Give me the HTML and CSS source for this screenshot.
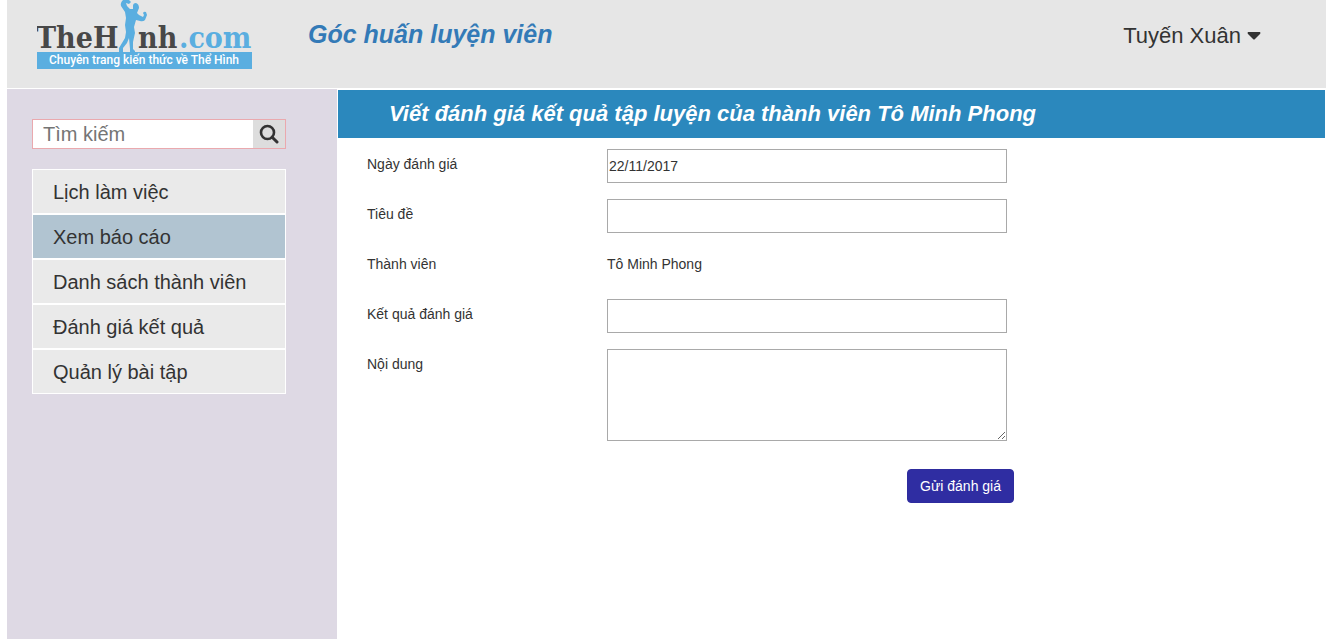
FILE: index.html
```html
<!DOCTYPE html>
<html lang="vi">
<head>
<meta charset="utf-8">
<title>Góc huấn luyện viên</title>
<meta name="viewport" content="width=device-width, initial-scale=1">
<link rel="stylesheet" href="styles.css">
</head>
<body>
<header class="site-header">
  <a class="logo" href="#" aria-label="TheHình.com">
    <svg class="logo-art" width="216" height="70" viewBox="0 0 216 70">
      <text class="logo-dark" x="-1" y="48">TheH</text>
      <text class="logo-dark" x="101" y="48">nh</text>
      <text class="logo-blue" x="142" y="48">.com</text>
      <path fill="#5aaee0" d="M86 0 H92 L94 2 L92 4 L89 3 L90 6 L93 9 L96 9 L96 6 Q96 3 99 3 Q102 4 102 8 L100 13 L102 15 L106 17 L107 15 L106 13 Q107 11 109 12 L110 15 L108 20 Q106 22 103 21 L99 20 L97 27 L98 33 L96 42 L96 49 L98 51 L98 52 H93 L93 49 L92 38 L90 43 L86 48 L86 52 H82 V48 L85 43 L88 38 L89 32 L88 25 L89 18 L88 12 L84 6 Q83 3 86 0Z"/>
      <rect y="52" width="215" height="17" fill="#5aaee0"/>
      <text class="logo-tag" x="107" y="64" text-anchor="middle">Chuyên trang kiến thức về Thể Hình</text>
    </svg>
  </a>
  <h1 class="site-title"><a href="#">Góc huấn luyện viên</a></h1>
  <button class="user-menu" type="button">Tuyến Xuân
    <svg width="14" height="8" viewBox="0 0 14 8" aria-hidden="true"><path fill="#333" d="M1 0 H13 Q14 1 13 2 L8 7 Q7 8 6 7 L1 2 Q0 1 1 0Z"/></svg>
  </button>
</header>
<div class="layout">
  <aside class="sidebar">
    <form class="search">
      <input class="search-input" type="text" placeholder="Tìm kiếm" aria-label="Tìm kiếm">
      <button class="search-button" type="button" aria-label="Tìm">
        <svg width="20" height="20" viewBox="0 0 20 20" aria-hidden="true" fill="none" stroke="#333"><circle cx="8.500" cy="8.500" r="6.500" stroke-width="2.600"/><path d="M13.200 13.200 L18 18" stroke-width="3" stroke-linecap="round"/></svg>
      </button>
    </form>
    <nav class="menu">
      <a class="menu-item" href="#">Lịch làm việc</a>
      <a class="menu-item menu-item-active" href="#">Xem báo cáo</a>
      <a class="menu-item" href="#">Danh sách thành viên</a>
      <a class="menu-item" href="#">Đánh giá kết quả</a>
      <a class="menu-item" href="#">Quản lý bài tập</a>
    </nav>
  </aside>
  <main class="content">
    <h2 class="content-title">Viết đánh giá kết quả tập luyện của thành viên Tô Minh Phong</h2>
    <form class="review-form">
      <label class="text" for="date">Ngày đánh giá</label>
      <input class="field" id="date" type="text" value="22/11/2017">
      <label class="text" for="subject">Tiêu đề</label>
      <input class="field" id="subject" type="text">
      <span class="text">Thành viên</span>
      <span class="text">Tô Minh Phong</span>
      <label class="text" for="result">Kết quả đánh giá</label>
      <input class="field" id="result" type="text">
      <label class="text" for="body">Nội dung</label>
      <textarea class="field field-large" id="body"></textarea>
      <button class="submit" type="button">Gửi đánh giá</button>
    </form>
  </main>
</div>
</body>
</html>
```
FILE: styles.css
```css
* {
  box-sizing: border-box;
}

body {
  display: flex;
  flex-direction: column;
  min-height: 100vh;
  margin: 0;
  padding: 0 12px 0 7px;
  background: #fff;
  color: #333;
  font: 14px/20px "Liberation Sans", Arial, sans-serif;
}

a {
  color: inherit;
  text-decoration: none;
}

button,
input,
textarea {
  font: inherit;
  color: inherit;
  border-radius: 0;
}

.site-header {
  display: flex;
  align-items: flex-start;
  height: 88px;
  padding: 0 65px 0 30px;
  background: #e6e6e6;
}

.logo-art {
  display: block;
}

.logo-dark,
.logo-blue {
  font: bold 30px "DejaVu Serif Condensed", "DejaVu Serif", serif;
  fill: #484848;
}

.logo-blue {
  fill: #5aaee0;
}

.logo-tag {
  font: 500 12px Roboto, sans-serif;
  fill: #fff;
}

.site-title {
  margin: 20px 0 0 55px;
  color: #337ab7;
  font-size: 25px;
  font-style: italic;
  line-height: 28px;
}

.user-menu {
  display: flex;
  align-items: center;
  gap: 6px;
  margin: 22px 0 0 auto;
  padding: 0;
  border: 0;
  background: none;
  font-size: 22px;
  line-height: 28px;
}

.layout {
  display: grid;
  grid-template-columns: 330px minmax(0, 1fr);
  flex: 1;
  gap: 1px;
  margin-top: 1px;
}

.sidebar {
  padding: 30px 51px 0 25px;
  background: #ded9e4;
}

.search {
  display: flex;
  height: 30px;
  margin-bottom: 20px;
  border: 1px solid #eaa9ae;
}

.search-input {
  flex: 1;
  min-width: 0;
  padding: 0 10px;
  border: 0;
  background: #fff;
  font-size: 20px;
}

.search-input::placeholder {
  color: #757575;
}

.search-button {
  display: grid;
  place-items: center;
  width: 32px;
  padding: 0;
  border: 0;
  background: #ddd;
}

.menu-item {
  display: block;
  padding: 2px 20px 0;
  border: 1px solid #fff;
  background: #eaeaea;
  font-size: 20px;
  line-height: 41px;
}

.menu-item-active {
  background: #b1c4d1;
}

.content {
  padding: 1px 1px 0 0;
}

.content-title {
  margin: 0;
  padding: 1px 51px;
  background: #2b88bd;
  color: #fff;
  font-size: 22px;
  font-style: italic;
  line-height: 46px;
}

.review-form {
  display: grid;
  grid-template-columns: 240px 1fr;
  gap: 16px 0;
  max-width: 676px;
  padding: 11px 0 24px 29px;
}

.text {
  min-height: 34px;
  padding-top: 5px;
}

.field {
  display: block;
  width: 100%;
  max-width: 400px;
  height: 34px;
  margin: 0;
  padding: 1px;
  border: 1px solid #a9a9a9;
  background: #fff;
}

.field-large {
  height: 92px;
}

.submit {
  grid-column: 2;
  justify-self: end;
  margin-top: 12px;
  padding: 6px 12px;
  border: 1px solid #2e2c9e;
  border-radius: 4px;
  background: #2f2da2;
  color: #fff;
}
```
